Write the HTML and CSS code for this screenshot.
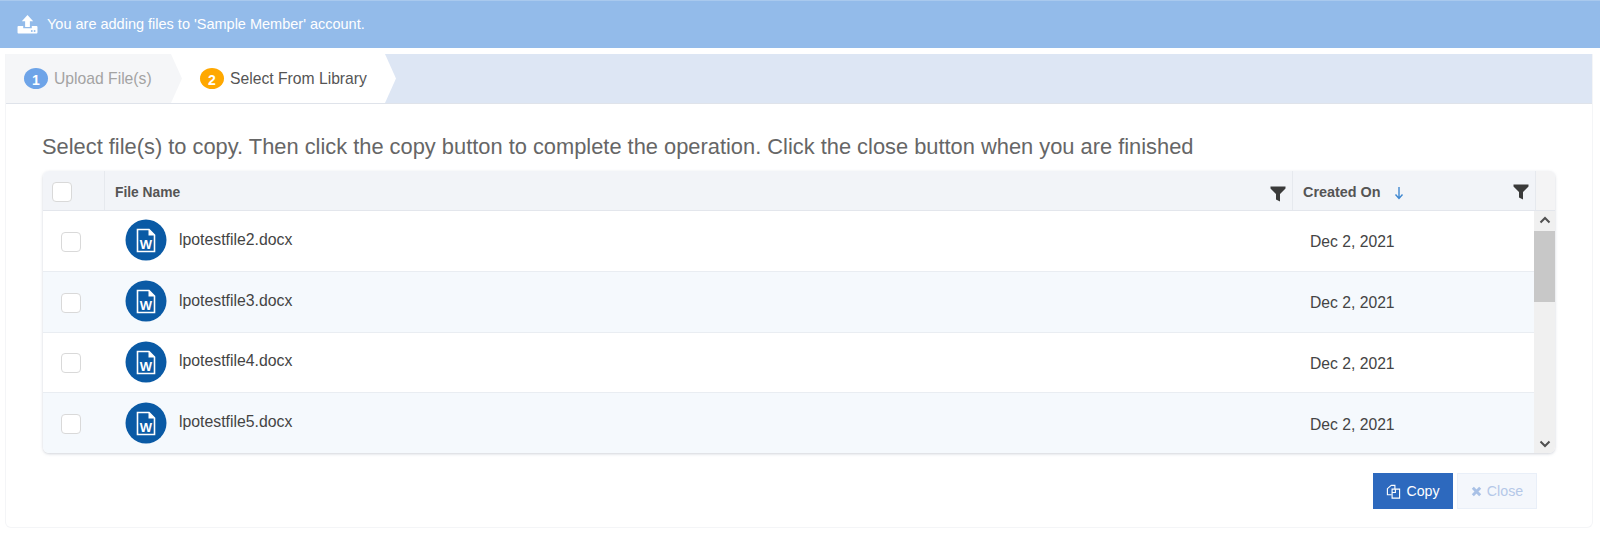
FILE: index.html
```html
<!DOCTYPE html>
<html lang="en">
<head>
<meta charset="utf-8">
<title>Select From Library</title>
<link rel="stylesheet" href="styles.css">
</head>
<body>
<svg class="defs" width="0" height="0" aria-hidden="true">
  <symbol id="funnel" viewBox="0 0 16 16">
    <path d="M0.500 0.500H15.500V2.500L10 8V15.500L6 13.500V8L0.500 2.500Z" fill="#3a3a3a"/>
  </symbol>
</svg>
<div class="banner">
  <svg class="upload" viewBox="0 0 22 20" width="21" height="19"><path d="M11 0L17 6.500H13.500V12.500H8.500V6.500H5Z" fill="#fff"/><path d="M1.500 11.500H6.500V14H15.500V11.500H20.500Q21.500 11.500 21.500 12.500V18.500Q21.500 19.500 20.500 19.500H1.500Q0.500 19.500 0.500 18.500V12.500Q0.500 11.500 1.500 11.500Z" fill="#fff"/><circle cx="15.500" cy="16.800" r="1" fill="#92bbea"/><circle cx="18.500" cy="16.800" r="1" fill="#92bbea"/></svg>
  <span>You are adding files to 'Sample Member' account.</span>
</div>
<main class="card">
  <nav class="steps">
    <div class="step step-done"><span class="badge badge-blue">1</span><span>Upload File(s)</span></div>
    <div class="step step-active"><span class="badge badge-orange">2</span><span>Select From Library</span></div>
  </nav>
  <h1 class="title">Select file(s) to copy. Then click the copy button to complete the operation. Click the close button when you are finished</h1>
  <section class="grid">
    <div class="head">
      <div class="hcell hcheck"><span class="check"></span></div>
      <div class="hcell hname"><span>File Name</span><svg class="funnel"><use href="#funnel"/></svg></div>
      <div class="hcell hdate"><span>Created On</span><svg class="sort" viewBox="0 0 10 14" width="10" height="14"><path d="M5 1V12M1.500 8.500L5 12.500L8.500 8.500" fill="none" stroke="#3f87d0" stroke-width="1.400"/></svg><svg class="funnel funnel-end"><use href="#funnel"/></svg></div>
      <div class="hcell hpad"></div>
    </div>
    <div class="body">
      <div class="rows">
        <div class="row"><div class="ccheck"><span class="check"></span></div><div class="cname"><svg class="word" viewBox="0 0 42 42"><circle cx="21" cy="21" r="20.500" fill="#0a5aa5"/><path d="M12.500 10.500H24L29.500 16V32.500H12.500Z" fill="none" stroke="#fff" stroke-width="1.600"/><path d="M23.500 10V16.500H30Z" fill="#fff"/><text x="21" y="29.500" text-anchor="middle" class="word-w">W</text></svg><span>lpotestfile2.docx</span></div><div class="cdate">Dec 2, 2021</div></div>
        <div class="row alt"><div class="ccheck"><span class="check"></span></div><div class="cname"><svg class="word" viewBox="0 0 42 42"><circle cx="21" cy="21" r="20.500" fill="#0a5aa5"/><path d="M12.500 10.500H24L29.500 16V32.500H12.500Z" fill="none" stroke="#fff" stroke-width="1.600"/><path d="M23.500 10V16.500H30Z" fill="#fff"/><text x="21" y="29.500" text-anchor="middle" class="word-w">W</text></svg><span>lpotestfile3.docx</span></div><div class="cdate">Dec 2, 2021</div></div>
        <div class="row"><div class="ccheck"><span class="check"></span></div><div class="cname"><svg class="word" viewBox="0 0 42 42"><circle cx="21" cy="21" r="20.500" fill="#0a5aa5"/><path d="M12.500 10.500H24L29.500 16V32.500H12.500Z" fill="none" stroke="#fff" stroke-width="1.600"/><path d="M23.500 10V16.500H30Z" fill="#fff"/><text x="21" y="29.500" text-anchor="middle" class="word-w">W</text></svg><span>lpotestfile4.docx</span></div><div class="cdate">Dec 2, 2021</div></div>
        <div class="row alt"><div class="ccheck"><span class="check"></span></div><div class="cname"><svg class="word" viewBox="0 0 42 42"><circle cx="21" cy="21" r="20.500" fill="#0a5aa5"/><path d="M12.500 10.500H24L29.500 16V32.500H12.500Z" fill="none" stroke="#fff" stroke-width="1.600"/><path d="M23.500 10V16.500H30Z" fill="#fff"/><text x="21" y="29.500" text-anchor="middle" class="word-w">W</text></svg><span>lpotestfile5.docx</span></div><div class="cdate">Dec 2, 2021</div></div>
      </div>
      <div class="scroll">
        <svg class="arrow" viewBox="0 0 12 8" width="12" height="8"><path d="M1.500 6.500L6 2L10.500 6.500" fill="none" stroke="#505050" stroke-width="2"/></svg>
        <div class="thumb"></div>
        <svg class="arrow arrow-down" viewBox="0 0 12 8" width="12" height="8"><path d="M1.500 1.500L6 6L10.500 1.500" fill="none" stroke="#505050" stroke-width="2"/></svg>
      </div>
    </div>
  </section>
  <div class="actions">
    <button class="btn btn-copy" type="button"><svg viewBox="0 0 16 16" width="15" height="15"><path d="M5.500 1.500H9.500V5.500M5.500 1.500L1.500 5V11.500H6" fill="none" stroke="#fff" stroke-width="1.200"/><path d="M6.500 5.500H14.500V15H6.500Z" fill="none" stroke="#fff" stroke-width="1.200"/><path d="M10 5.500V9H6.500" fill="none" stroke="#fff" stroke-width="1.200"/></svg>Copy</button>
    <button class="btn btn-close" type="button"><svg viewBox="0 0 12 12" width="11" height="11"><path d="M2 2L10 10M10 2L2 10" stroke="#a9c1e6" stroke-width="3.200"/></svg>Close</button>
  </div>
</main>
</body>
</html>
```

FILE: styles.css
```css
* { box-sizing: border-box; }
html, body { margin: 0; padding: 0; }
body {
  width: 1600px;
  height: 534px;
  overflow: hidden;
  background: #fff;
  font-family: "Liberation Sans", Arial, sans-serif;
  color: #444;
}
.defs { position: absolute; }
.word-w { font: bold 13px "Liberation Sans", Arial, sans-serif; fill: #fff; }

.banner {
  height: 48px;
  background: #93bbea;
  border-top: 1px solid #a9c9ee;
  display: flex;
  align-items: center;
  padding: 0 0 1px 17px;
  gap: 9px;
  color: #fff;
  font-size: 14.500px;
}

.card {
  margin: 6px 7px 0 5px;
  height: 474px;
  border: 1px solid #f4f5f7;
  border-top: 0;
  border-radius: 0 0 6px 6px;
  display: flex;
  flex-direction: column;
}

.steps {
  height: 50px;
  background: #dde6f4;
  border-bottom: 1px solid #dfe3ea;
  display: flex;
  color: #555;
  font-size: 15.700px;
}
.step {
  height: 49px;
  display: flex;
  align-items: center;
  gap: 6px;
}
.step-done {
  width: 176px;
  padding: 0 0 0 18px;
  background: #f5f6f8;
  color: #a3a3a3;
  clip-path: polygon(0 0, 165px 0, 176px 50%, 165px 100%, 0 100%);
  position: relative;
  z-index: 1;
}
.step-active {
  width: 225px;
  margin-left: -11px;
  padding: 0 0 0 29px;
  background: #fff;
  clip-path: polygon(0 0, 214px 0, 225px 50%, 214px 100%, 0 100%);
}
.badge {
  width: 24px;
  height: 21px;
  border-radius: 50%;
  color: #fff;
  font-size: 14px;
  font-weight: bold;
  display: flex;
  align-items: center;
  justify-content: center;
  padding-top: 2px;
}
.badge-blue { background: #6ea4e8; }
.badge-orange { background: #ffa800; }

.title {
  margin: 31px 0 0 36px;
  height: 36px;
  font-weight: normal;
  font-size: 21.850px;
  line-height: 23px;
  color: #666;
  white-space: nowrap;
}

.grid {
  width: 1512px;
  margin-left: 37px;
  height: 282px;
  border-radius: 6px;
  box-shadow: 0 1px 3px rgba(120, 130, 150, 0.35);
  overflow: hidden;
  display: flex;
  flex-direction: column;
}
.head {
  height: 40px;
  flex: none;
  display: flex;
  background: #f2f4f8;
  border-bottom: 1px solid #e3e6ec;
  font-weight: bold;
  color: #555;
}
.hcell {
  display: flex;
  align-items: center;
  border-right: 1px solid #e6e9ee;
}
.hcell > span { margin-top: 3px; }
.hcheck { width: 62px; padding-left: 9px; }
.hcheck > .check { margin-top: 3px; }
.hname { width: 1188px; padding: 0 6px 0 10px; justify-content: space-between; font-size: 13.800px; }
.hdate { width: 243px; padding: 0 6px 0 10px; font-size: 14.400px; }
.hpad { flex: 1; border-right: 0; background: #f4f4f5; }
.sort { margin-left: 13px; margin-top: 5px; }
.funnel { width: 16px; height: 16px; margin-top: 6px; }
.funnel-end { margin-left: auto; margin-top: 3px; }

.check {
  display: block;
  width: 20px;
  height: 20px;
  border: 1px solid #d9d9d9;
  border-radius: 4px;
  background: #fff;
}

.body { flex: 1; display: flex; min-height: 0; }
.rows { flex: 1; display: flex; flex-direction: column; }
.row {
  flex: 1;
  display: flex;
  align-items: center;
  border-bottom: 1px solid #e9edf2;
  font-size: 15.800px;
  color: #444;
  background: #fff;
}
.row:last-child { border-bottom: 0; }
.alt { background: #f5f9fd; }
.ccheck { width: 62px; padding: 2px 0 0 18px; }
.cname { width: 1188px; padding: 0 0 1px 20px; display: flex; align-items: center; gap: 12px; }
.cname span { margin-bottom: 1px; }
.word { width: 42px; height: 42px; flex: none; }
.cdate { padding: 3px 0 0 17px; font-size: 15.700px; }

.scroll {
  width: 21px;
  flex: none;
  background: #f0f0f0;
  display: flex;
  flex-direction: column;
  align-items: center;
}
.arrow { flex: none; margin-top: 5px; margin-bottom: 7px; }
.arrow-down { margin: auto 0 5px; }
.thumb { width: 100%; height: 71px; background: #c8c8c8; flex: none; }

.actions {
  display: flex;
  justify-content: flex-end;
  gap: 4px;
  margin: 20px 55px 0 0;
}
.btn {
  height: 36px;
  display: flex;
  align-items: center;
  justify-content: center;
  gap: 5px;
  font: 14.200px "Liberation Sans", Arial, sans-serif;
  border-radius: 0;
  padding: 0;
}
.btn-copy { width: 80px; background: #2d69be; border: 1px solid #2d69be; color: #fff; }
.btn-close { width: 80px; background: #f4f7fc; border: 1px solid #e9eff8; color: #b4c8e8; }
```
